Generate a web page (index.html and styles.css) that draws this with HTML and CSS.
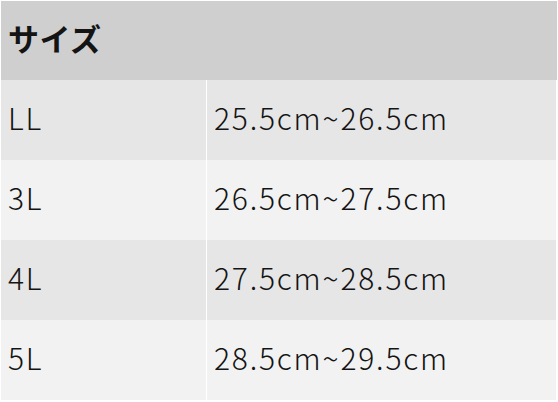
FILE: index.html
```html
<!DOCTYPE html>
<html lang="ja">
<head>
<meta charset="utf-8">
<link rel="stylesheet" href="styles.css">
</head>
<body>
<div class="table">
  <div class="head">サイズ</div>
  <div class="cell odd">LL</div><div class="cell odd">25.5cm~26.5cm</div>
  <div class="cell even">3L</div><div class="cell even">26.5cm~27.5cm</div>
  <div class="cell odd">4L</div><div class="cell odd">27.5cm~28.5cm</div>
  <div class="cell even">5L</div><div class="cell even">28.5cm~29.5cm</div>
</div>
</body>
</html>
```
FILE: styles.css
```css
html, body {
  margin: 0;
  padding: 0;
  background: #ffffff;
}
body {
  padding: 1px 2px 2px 1px;
  font-family: "Noto Sans CJK JP", "Noto Sans", sans-serif;
  color: #141414;
}
.table {
  display: grid;
  grid-template-columns: 205px 349px;
  grid-template-rows: 79px repeat(4, 80px);
  column-gap: 1px;
  width: 555px;
}
.head {
  grid-column: 1 / span 2;
  background: #cfcfcf;
  font-weight: 700;
  font-size: 31px;
  letter-spacing: 0.5px;
  padding-left: 7px;
  padding-bottom: 6px;
  display: flex;
  align-items: center;
  margin-right: -1px;
}
.cell {
  display: flex;
  align-items: center;
  padding-left: 7px;
  padding-bottom: 6px;
  font-size: 30px;
  font-weight: 300;
  letter-spacing: 1.8px;
}
.odd { background: #e6e6e6; }
.even { background: #f2f2f2; }
```
